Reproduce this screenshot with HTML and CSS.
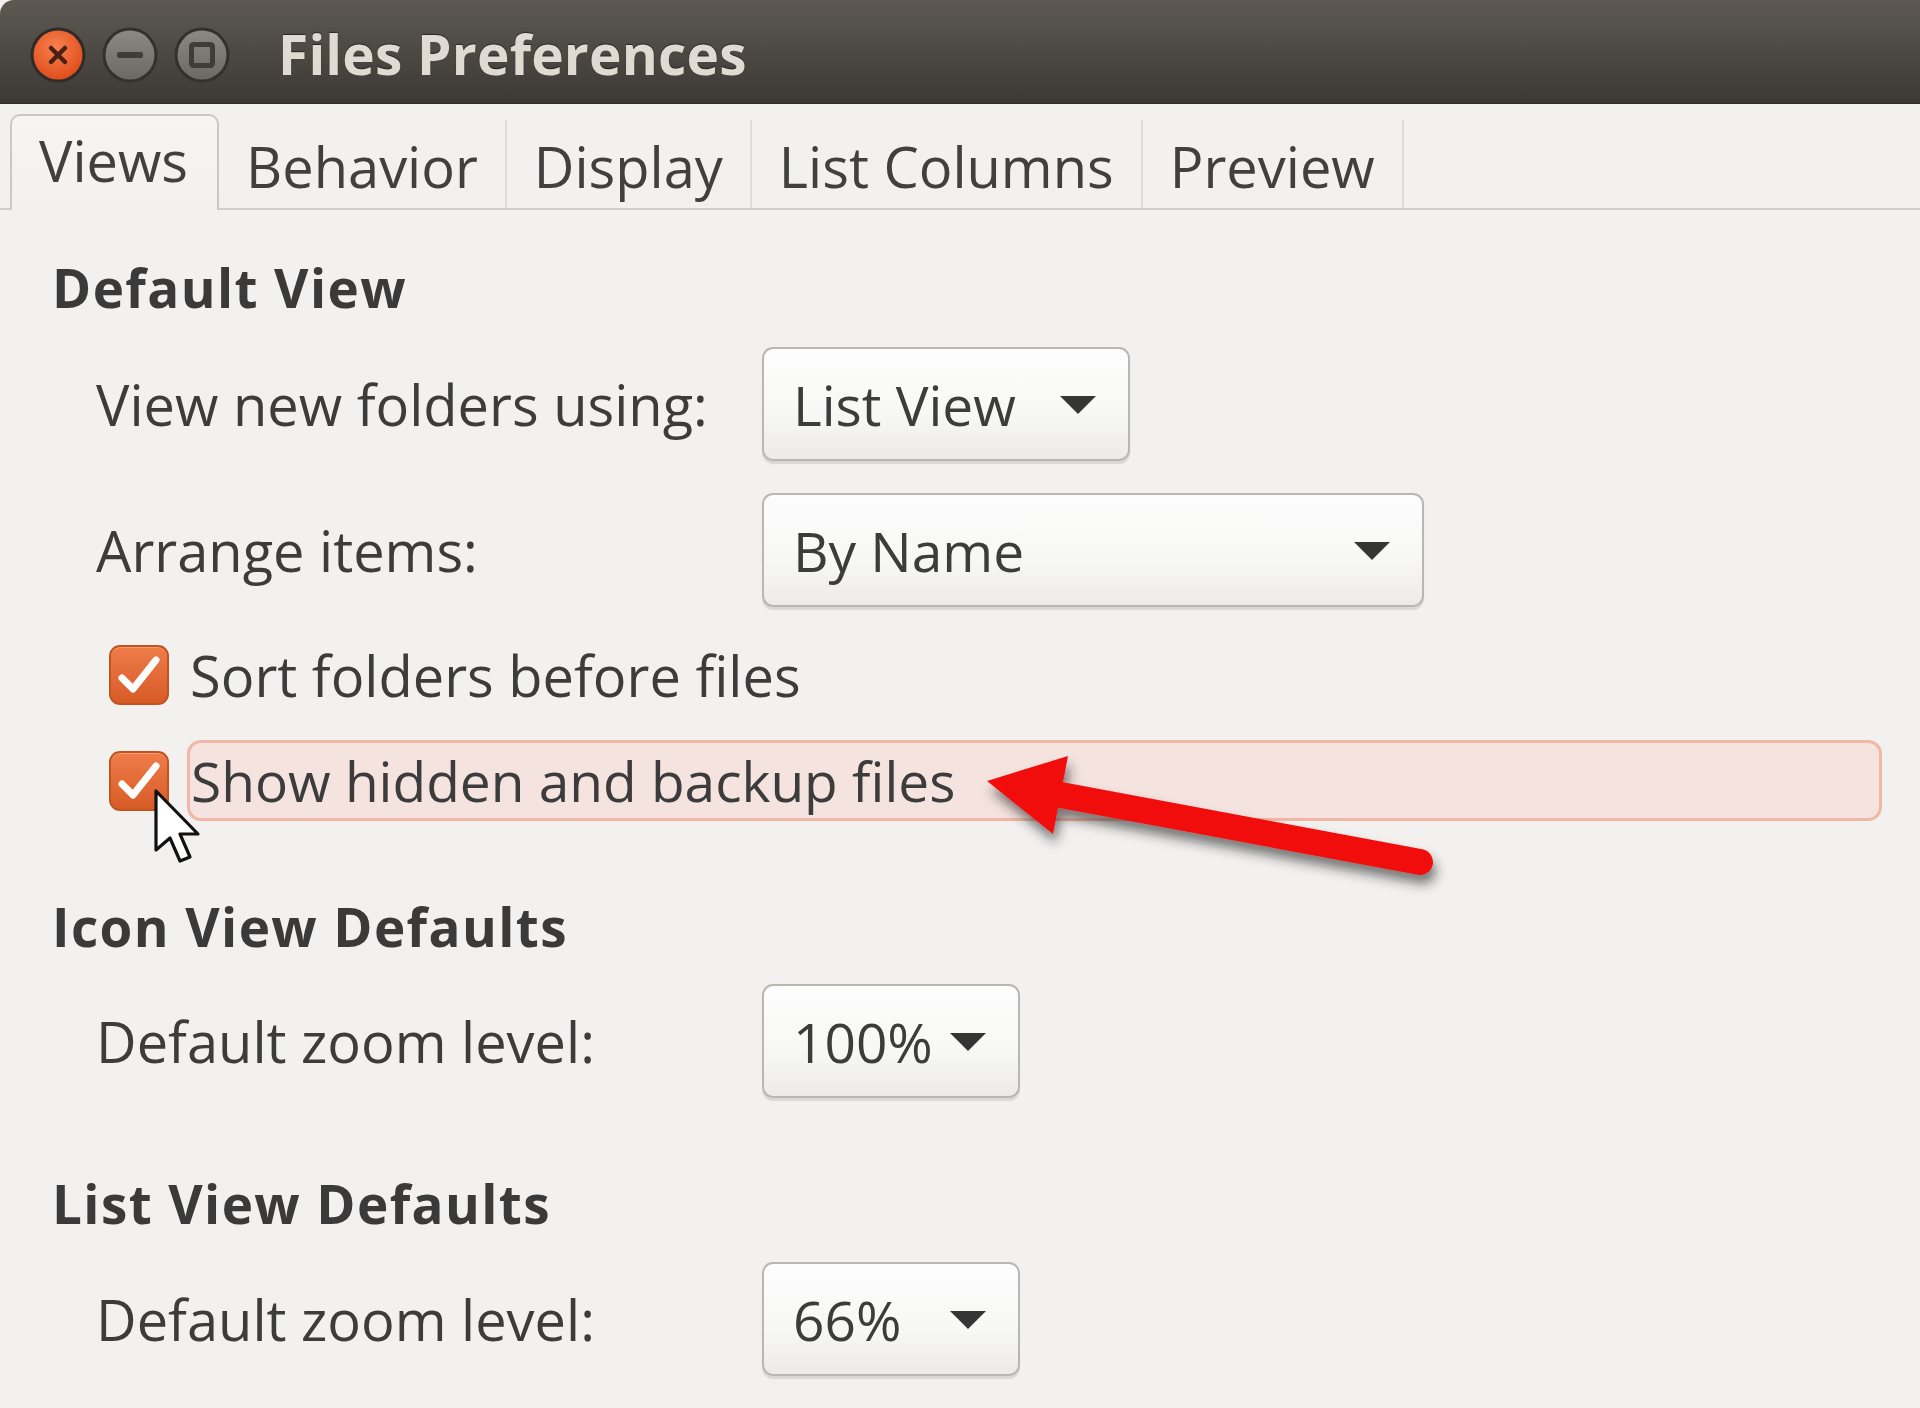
FILE: index.html
```html
<!DOCTYPE html>
<html lang="en">
<head>
<meta charset="utf-8">
<title>Files Preferences</title>
<link rel="stylesheet" href="styles.css">
</head>
<body>
<div class="window">
  <header class="titlebar">
    <div class="wbtns">
      <svg class="wbtn" width="56" height="56" viewBox="0 0 56 56">
        <defs>
          <radialGradient id="gClose" cx="45%" cy="35%" r="70%">
            <stop offset="0" stop-color="#f8814f"/>
            <stop offset="1" stop-color="#de4a18"/>
          </radialGradient>
          <linearGradient id="gGray" x1="0" y1="0" x2="0" y2="1">
            <stop offset="0" stop-color="#8c8983"/>
            <stop offset="1" stop-color="#6c6964"/>
          </linearGradient>
        </defs>
        <circle cx="28" cy="28" r="27.5" fill="#2e2b28"/>
        <circle cx="28" cy="28" r="24.5" fill="url(#gClose)"/>
        <path d="M21 21 L35 35 M35 21 L21 35" stroke="#4a2215" stroke-width="4.5" stroke-linecap="round"/>
      </svg>
      <svg class="wbtn" width="56" height="56" viewBox="0 0 56 56">
        <circle cx="28" cy="28" r="27.5" fill="#34312d"/>
        <circle cx="28" cy="28" r="24.5" fill="url(#gGray)"/>
        <rect x="15" y="25" width="26" height="6" rx="2" fill="#3f3d39"/>
      </svg>
      <svg class="wbtn" width="56" height="56" viewBox="0 0 56 56">
        <circle cx="28" cy="28" r="27.5" fill="#34312d"/>
        <circle cx="28" cy="28" r="24.5" fill="url(#gGray)"/>
        <rect x="17.5" y="17.5" width="21" height="21" rx="2" fill="none" stroke="#3f3d39" stroke-width="5"/>
      </svg>
    </div>
    <h1 class="title">Files Preferences</h1>
  </header>

  <nav class="tabs">
    <div class="tab tab-active">Views</div>
    <div class="tab">Behavior</div>
    <div class="tab">Display</div>
    <div class="tab">List Columns</div>
    <div class="tab">Preview</div>
  </nav>

  <main class="content">
    <h2 class="heading heading-first">Default View</h2>
    <div class="row row-1">
      <span class="label">View new folders using:</span>
      <div class="combo combo-list">List View<span class="caret"></span></div>
    </div>
    <div class="row row-2">
      <span class="label">Arrange items:</span>
      <div class="combo combo-name">By Name<span class="caret"></span></div>
    </div>
    <div class="check check-1">
      <span class="box"><svg width="60" height="60" viewBox="0 0 60 60"><path d="M13 33 L24 44 L47 15" fill="none" stroke="#fff" stroke-width="7" stroke-linecap="round" stroke-linejoin="round"/></svg></span>
      <span class="check-label">Sort folders before files</span>
    </div>
    <div class="check check-2">
      <span class="box"><svg width="60" height="60" viewBox="0 0 60 60"><path d="M13 33 L24 44 L47 15" fill="none" stroke="#fff" stroke-width="7" stroke-linecap="round" stroke-linejoin="round"/></svg></span>
      <span class="check-label hilite">Show hidden and backup files</span>
    </div>

    <h2 class="heading heading-second">Icon View Defaults</h2>
    <div class="row row-3">
      <span class="label">Default zoom level:</span>
      <div class="combo combo-zoom">100%<span class="caret"></span></div>
    </div>

    <h2 class="heading heading-third">List View Defaults</h2>
    <div class="row row-4">
      <span class="label">Default zoom level:</span>
      <div class="combo combo-zoom">66%<span class="caret"></span></div>
    </div>
  </main>

  <svg class="annotation" width="1920" height="1408" viewBox="0 0 1920 1408">
    <defs>
      <filter id="shadow" x="-20%" y="-20%" width="140%" height="160%">
        <feDropShadow dx="3" dy="9" stdDeviation="6" flood-color="#252525" flood-opacity="0.6"/>
      </filter>
    </defs>
    <g filter="url(#shadow)">
      <line x1="1050" y1="793" x2="1420" y2="862" stroke="#f20d0d" stroke-width="26" stroke-linecap="round"/>
      <polygon points="987,781 1068,756 1053,834" fill="#f20d0d"/>
    </g>
  </svg>

  <svg class="cursor" width="50" height="80" viewBox="0 0 50 80">
    <path d="M3 3 L3 62 L17 50 L27 73 L37 69 L27 46 L45 46 Z" fill="#fff" stroke="#111" stroke-width="3.2" stroke-linejoin="round"/>
  </svg>
</div>
</body>
</html>
```

FILE: styles.css
```css
* { box-sizing: border-box; }

html, body {
  margin: 0;
  padding: 0;
}

body {
  width: 1920px;
  height: 1408px;
  overflow: hidden;
  background: #f2f1f0;
  font-family: "Open Sans", "Noto Sans", "DejaVu Sans", sans-serif;
  color: #3c3c3c;
}

.window {
  position: relative;
  width: 1920px;
  height: 1408px;
  background: #f2f1f0;
}

/* ---------- title bar ---------- */
.titlebar {
  height: 104px;
  display: flex;
  align-items: center;
  padding-left: 30px;
  padding-top: 6px;
  background: linear-gradient(#5d5952, #3c3935);
  border-top-left-radius: 14px;
  border-bottom: 1px solid #2f2d2a;
}

.wbtns {
  display: flex;
  gap: 16px;
}

.wbtn { display: block; }

.title {
  margin: -2px 0 0 48px;
  font-size: 55px;
  font-weight: 700;
  color: #dfdbd2;
  letter-spacing: 0.2px;
  line-height: 1;
  text-shadow: 0 -1px 1px rgba(0,0,0,0.5);
}

/* ---------- tabs ---------- */
.tabs {
  height: 106px;
  display: flex;
  align-items: flex-end;
  padding-left: 10px;
  border-bottom: 2px solid #d2cec9;
  background: #f2f1f0;
}

.tab {
  height: 88px;
  padding: 4px 27px 0 27px;
  display: flex;
  align-items: center;
  font-size: 56px;
  color: #404040;
  border-right: 2px solid #dfdbd6;
}

.tab-active {
  height: 96px;
  margin-bottom: -2px;
  padding: 0 29px 6px 27px;
  border: 2px solid #cbc7c2;
  border-bottom: none;
  border-radius: 10px 10px 0 0;
  background: linear-gradient(#f6f5f4, #f2f1f0);
}

/* ---------- content ---------- */
.content {
  padding-left: 52px;
  display: flex;
  flex-direction: column;
}

.heading {
  margin: 0;
  height: 60px;
  line-height: 60px;
  font-size: 53px;
  font-weight: 700;
  color: #3a3a3a;
  letter-spacing: 1.4px;
}

.heading-first { margin-top: 48px; }
.heading-second { margin-top: 76px; }
.heading-third { margin-top: 76px; }

.row {
  display: flex;
  align-items: center;
}

.row-1 { margin-top: 29px; }
.row-2 { margin-top: 32px; }
.row-3 { margin-top: 27px; }
.row-4 { margin-top: 28px; }

.label {
  width: 710px;
  padding-left: 44px;
  font-size: 56px;
  line-height: 1;
}

.combo {
  height: 114px;
  display: flex;
  align-items: center;
  padding: 0 32px 0 29px;
  font-size: 55px;
  color: #3c3c3c;
  border: 2px solid #bab6b1;
  border-radius: 11px;
  background: linear-gradient(#fdfdfd 0%, #f7f7f6 60%, #ecebea 100%);
  box-shadow: 0 3px 1px rgba(0,0,0,0.10);
}

.combo-list { width: 368px; }
.combo-name { width: 662px; }
.combo-zoom { width: 258px; }

.caret {
  margin-left: auto;
  width: 0;
  height: 0;
  border-left: 18px solid transparent;
  border-right: 18px solid transparent;
  border-top: 18px solid #353535;
  margin-top: 2px;
}

/* ---------- checkboxes ---------- */
.check {
  display: flex;
  align-items: center;
  padding-left: 57px;
}

.check-1 { margin-top: 38px; height: 60px; }
.check-2 { margin-top: 35px; height: 81px; }

.box {
  width: 60px;
  height: 60px;
  flex: none;
  border-radius: 11px;
  border: 2px solid #c4531f;
  background: linear-gradient(#ee7c49, #d85b27);
  box-shadow: inset 0 1px 0 rgba(255,255,255,0.25);
  display: flex;
  align-items: center;
  justify-content: center;
}

.box svg { display: block; margin: -2px; }

.check-label {
  font-size: 56px;
  line-height: 1;
  margin-left: 21px;
}

.check-2 .hilite {
  font-size: 55px;
}

.hilite {
  flex: 1;
  height: 81px;
  margin-left: 18px;
  margin-right: 38px;
  padding-left: 1px;
  display: flex;
  align-items: center;
  border: 3px solid #f2b7a4;
  border-radius: 14px;
  background: #f5e3df;
}

/* ---------- overlays ---------- */
.annotation {
  position: absolute;
  left: 0;
  top: 0;
  pointer-events: none;
}

.cursor {
  position: absolute;
  left: 153px;
  top: 788px;
  pointer-events: none;
}
```
